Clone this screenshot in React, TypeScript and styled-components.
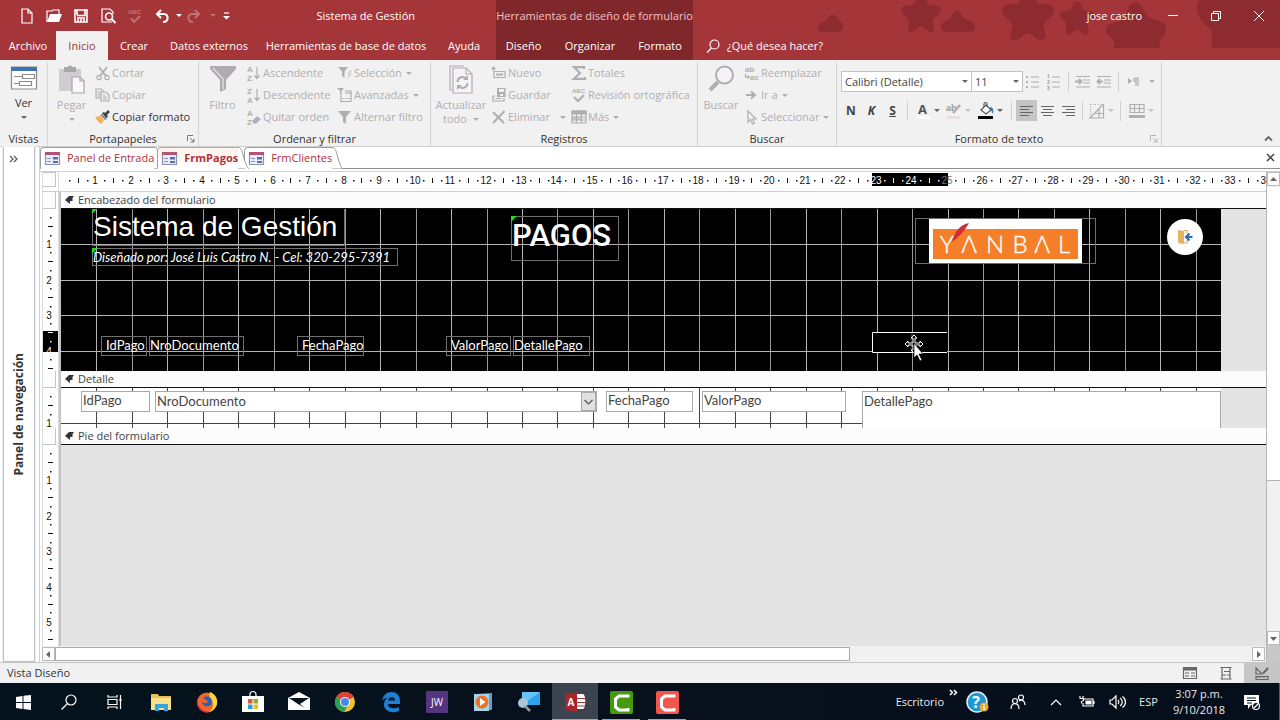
import React from "react";
import styled, { createGlobalStyle, css } from "styled-components";

const UI = `"Open Sans", "Noto Sans", sans-serif`;
const FORM = `Lato, "Open Sans", sans-serif`;
const GLYPH = `"Liberation Sans", Arial, sans-serif`;
const DIM = "#b0aeb0";
const INK = "#444";

const Global = createGlobalStyle`
  * { box-sizing: border-box; }
  body { margin: 0; background: #fff; font: 11px/14px ${UI}; color: #333; }
  button, input, select, textarea { font: inherit; color: inherit; margin: 0; padding: 0; border: 0; background: none; border-radius: 0; }
  button { cursor: default; }
  svg { display: block; flex: none; overflow: visible; }
`;

/* ---------- shell ---------- */

const Shell = styled.div`
  display: flex;
  flex-direction: column;
  min-height: 100vh;
  overflow: hidden;
`;

/* ---------- title bar ---------- */

const Top = styled.header`
  position: relative;
  display: flex;
  height: 60px;
  background: #a43539;
  color: #fff;
`;
const TopPart = styled.div<{ $grow?: boolean; $dark?: boolean; $w?: number }>`
  position: relative;
  display: flex;
  flex-direction: column;
  ${(p) => (p.$grow ? "flex: 1; min-width: 0;" : `width: ${p.$w}px; flex: none;`)}
  ${(p) => p.$dark && "background: #80272c;"}
`;
const Decor = styled.svg`
  position: absolute;
  right: 0;
  top: 0;
  overflow: hidden;
`;
const TitleRow = styled.div`
  display: flex;
  align-items: center;
  height: 31px;
`;
const QuickBar = styled.div`
  display: flex;
  padding-left: 13px;
`;
const QuickButton = styled.button<{ $w?: number; $dim?: boolean }>`
  display: flex;
  align-items: center;
  justify-content: center;
  width: ${(p) => p.$w ?? 27}px;
  height: 30px;
  opacity: ${(p) => (p.$dim ? 0.3 : 1)};
`;
const AppTitle = styled.span`
  margin-left: auto;
  padding-right: 81px;
`;
const ContextTitle = styled.span`
  width: 100%;
  text-align: center;
  white-space: nowrap;
  color: #efc3c4;
`;
const UserName = styled.span`
  margin-left: auto;
  padding-right: 9px;
`;
const WindowButton = styled.button`
  display: flex;
  align-items: center;
  justify-content: center;
  width: 43px;
  height: 30px;
`;
const TabRow = styled.nav`
  display: flex;
  flex: 1;
`;
const RibbonTab = styled.button<{ $w: number; $on?: boolean }>`
  width: ${(p) => p.$w}px;
  white-space: nowrap;
  text-align: center;
  ${(p) => p.$on && "background: #f1f1f1; color: #a43539;"}
`;
const TellMe = styled.button`
  display: flex;
  align-items: center;
  gap: 7px;
  padding-left: 13px;
`;

/* ---------- ribbon ---------- */

const Ribbon = styled.section`
  display: flex;
  height: 87px;
  background: #f1f1f1;
  border-bottom: 1px solid #cfcfcf;
`;
const Group = styled.div<{ $w: number }>`
  position: relative;
  display: flex;
  flex-direction: column;
  flex: none;
  width: ${(p) => p.$w}px;
  margin-top: 2px;
  border-right: 1px solid #d4d4d4;
`;
const GroupBody = styled.div`
  display: flex;
  height: 70px;
`;
const GroupLabel = styled.div`
  display: flex;
  justify-content: center;
  position: relative;
  color: #333;
`;
const Launcher = styled.button`
  position: absolute;
  right: 3px;
  top: 3px;
`;
const BigButton = styled.button<{ $w: number; $dim?: boolean }>`
  display: flex;
  flex-direction: column;
  align-items: center;
  width: ${(p) => p.$w}px;
  padding-top: 3px;
  color: ${(p) => (p.$dim ? DIM : "#333")};
  svg:first-child { margin-bottom: 5px; }
`;
const BigText = styled.span`
  display: flex;
  align-items: center;
  gap: 3px;
`;
const Column = styled.div<{ $w: number }>`
  width: ${(p) => p.$w}px;
`;
const SmallButton = styled.button<{ $on?: boolean }>`
  display: flex;
  align-items: center;
  gap: 1px;
  height: 22px;
  color: ${(p) => (p.$on ? "#333" : DIM)};
  white-space: nowrap;
  width: 100%;
`;
const Caret = styled.i<{ $c?: string; $push?: boolean }>`
  width: 0;
  height: 0;
  margin-left: ${(p) => (p.$push ? "9px" : "3px")};
  border: 3px solid transparent;
  border-top-color: ${(p) => p.$c ?? "currentColor"};
  border-bottom: 0;
`;
const FormatBody = styled.div`
  display: flex;
  flex-direction: column;
  height: 70px;
  padding: 9px 0 0 4px;
  gap: 8px;
`;
const FormatRow = styled.div`
  display: flex;
  align-items: center;
  height: 21px;
`;
const Pick = styled.div<{ $w: number }>`
  position: relative;
  width: ${(p) => p.$w}px;
  height: 21px;
  margin-right: -1px;
  select {
    width: 100%;
    height: 100%;
    padding-left: 3px;
    appearance: none;
    background: #fff;
    border: 1px solid #c3c3c3;
    color: #444;
  }
  i { position: absolute; right: 4px; top: 9px; }
`;
const Tool = styled.button<{ $w: number; $on?: boolean }>`
  display: flex;
  align-items: center;
  justify-content: center;
  width: ${(p) => p.$w}px;
  height: 21px;
  font-weight: 700;
  font-size: 12px;
  color: ${INK};
  ${(p) => p.$on && "background: #c5c5c5;"}
`;
const Rule = styled.span<{ $m: number }>`
  width: 1px;
  height: 20px;
  margin: 0 ${(p) => p.$m}px;
  background: #d0d0d0;
`;
const Collapse = styled.button`
  margin: auto 7px 3px auto;
`;

/* ---------- workspace ---------- */

const Workspace = styled.main`
  display: flex;
  flex: 1;
  min-height: 514px;
  background: #fff;
`;
const NavPane = styled.aside`
  display: flex;
  flex-direction: column;
  align-items: center;
  width: 32px;
  margin: 0 4px 0 3px;
  border: 1px solid #b9bfc6;
  border-top: 0;
  outline: 1px solid #eef0f3;
`;
const NavToggle = styled.button`
  margin: 8px 12px 0 0;
`;
const NavTitle = styled.span`
  margin: auto 0;
  writing-mode: vertical-rl;
  transform: rotate(180deg);
  font-weight: 700;
  font-size: 12px;
  padding-bottom: 4px;
`;
const Document = styled.div`
  display: flex;
  flex-direction: column;
  flex: 1;
  min-width: 0;
  border-left: 1px solid #cfcfcf;
`;
const DocTabs = styled.div`
  display: flex;
  height: 22px;
  border-bottom: 1px solid #8f8f8f;
`;
const DocTab = styled.button<{ $on?: boolean; $lap?: number }>`
  position: relative;
  display: flex;
  align-items: center;
  gap: 7px;
  height: 22px;
  margin-left: ${(p) => p.$lap ?? 0}px;
  padding: 0 0 1px 4px;
  border: 1px solid #a0a0a0;
  border-width: 1px 0 0 1px;
  border-radius: 4px 0 0 0;
  background: #fff;
  color: #b0303a;
  ${(p) =>
    p.$on &&
    css`
      z-index: 1;
      font-weight: 700;
      border-top-color: #dba36c;
      background: linear-gradient(#fdf3ec, #fff);
    `}
`;
const Slope = styled.svg`
  position: absolute;
  left: 100%;
  top: -1px;
`;
const CloseDoc = styled.button`
  margin: 0 5px 0 auto;
`;
const Designer = styled.div`
  display: flex;
  flex: 1;
  margin-top: 2px;
  border-top: 1px solid #cfcfcf;
`;
const Sheet = styled.div`
  display: flex;
  flex-direction: column;
  flex: 1;
  min-width: 0;
  padding-left: 2px;
`;
const Band = styled.div<{ $fill?: boolean }>`
  display: flex;
  ${(p) => p.$fill && "flex: 1;"}
`;
const Gutter = styled.div`
  flex: none;
  width: 17px;
  border: 1px solid #dcdcdc;
  border-width: 0 1px;
  overflow: hidden;
`;
const Selector = styled.button<{ $tall?: boolean }>`
  display: block;
  width: 13px;
  height: ${(p) => (p.$tall ? 15 : 17)}px;
  border: 1px solid #c6c6c6;
  border-width: ${(p) => (p.$tall ? "1px 1px 1px 0" : "0 1px 1px 0")};
  background: #fdfdfd;
`;
const RulerRow = styled.div`
  display: flex;
  height: 20px;
  border-bottom: 1px solid #cfcfcf;
`;
const RulerClip = styled.div`
  flex: 1;
  min-width: 0;
  overflow: hidden;
  padding-left: 1px;
`;
const SectionColumn = styled.div`
  display: flex;
  flex-direction: column;
  flex: 1;
  min-width: 0;
  border-left: 2px solid #c4c4c4;
`;
const SectionBar = styled.h2`
  display: flex;
  align-items: center;
  gap: 4px;
  height: 17px;
  margin: 0;
  padding-left: 4px;
  font: inherit;
  color: #444;
  background: #fcfcfc;
  border-bottom: 1px solid #111;
`;
const Area = styled.div`
  display: flex;
  overflow: hidden;
  flex: 1;
  background: #e4e4e4;
`;
const Canvas = styled.div<{ $h: number; $dark?: boolean }>`
  position: relative;
  flex: none;
  width: 1160px;
  height: ${(p) => p.$h}px;
  overflow: hidden;
  background: ${(p) => (p.$dark ? "#000" : "#fff")};
`;
type Box = { $x: number; $y: number; $w: number; $h: number };
const box = css<Box>`
  position: absolute;
  left: ${(p) => p.$x}px;
  top: ${(p) => p.$y}px;
  width: ${(p) => p.$w}px;
  height: ${(p) => p.$h}px;
`;
const FormLabel = styled.div<Box & { $kind?: "title" | "sub" | "head"; $pad?: number }>`
  ${box}
  border: 1px solid #6f6f6f;
  color: #fff;
  white-space: nowrap;
  font: 13px/16px ${FORM};
  padding-left: ${(p) => p.$pad ?? 0}px;
  ${(p) => p.$kind === "title" && `font: 28px/36px "Liberation Sans", Arial, sans-serif;`}
  ${(p) => p.$kind === "sub" && `font: italic 13px/16px ${FORM};`}
  ${(p) => p.$kind === "head" && `font: 500 31px/38px Roboto, sans-serif;`}
`;
const Flag = styled.i`
  position: absolute;
  left: -1px;
  top: -1px;
  border: 3px solid transparent;
  border-color: #25d52c transparent transparent #25d52c;
`;
const fieldLook = css`
  border: 1px solid #a9a9a9;
  background: #fff;
  color: #444;
  font: 13px/18px ${FORM};
  padding: 0 1px 3px;
`;
const Field = styled.input<Box>`
  ${box}
  ${fieldLook}
`;
const Memo = styled.textarea<Box>`
  ${box}
  ${fieldLook}
  resize: none;
  overflow: hidden;
`;
const Combo = styled.div<Box>`
  ${box}
  select {
    width: 100%;
    height: 100%;
    appearance: none;
    ${fieldLook}
  }
`;
const ComboArrow = styled.span`
  position: absolute;
  right: 1px;
  top: 1px;
  width: 15px;
  height: 19px;
  display: flex;
  align-items: center;
  justify-content: center;
  background: #e0e0e0;
  border: 1px solid #aaa;
`;
const Placed = styled.div<Box>`
  ${box}
`;
const ExitButton = styled.button<Box>`
  ${box}
  display: flex;
  align-items: center;
  justify-content: center;
  border-radius: 50%;
  background: #fff;
`;
const VBar = styled.div`
  display: flex;
  flex-direction: column;
  width: 14px;
  background: #f1f1f1;
  border-left: 1px solid #b5b5b5;
`;
const ScrollButton = styled.button`
  display: flex;
  align-items: center;
  justify-content: center;
  flex: none;
  width: 13px;
  height: 14px;
  border: 1px solid #bbb;
  background: #fff;
  color: #666;
`;
const VThumb = styled.div`
  height: 60%;
  background: #fff;
  border-bottom: 1px solid #b5b5b5;
  margin-top: 1px;
`;
const VRest = styled.div`
  flex: 1;
`;
const Corner = styled.div`
  height: 17px;
  background: #c8c8c8;
`;
const HBar = styled.div`
  display: flex;
  align-items: center;
  height: 16px;
  padding-right: 1px;
  background: #f1f1f1;
`;
const HThumb = styled.div`
  width: 65%;
  height: 14px;
  background: #fff;
  border: 1px solid #ababab;
  margin-right: auto;
`;

/* ---------- status bar and taskbar ---------- */

const StatusBar = styled.footer`
  display: flex;
  align-items: center;
  height: 21px;
  padding-left: 7px;
  background: #f1f1f1;
  border-top: 1px solid #c6c6c6;
`;
const Views = styled.div`
  display: flex;
  margin-left: auto;
  height: 100%;
`;
const ViewButton = styled.button<{ $on?: boolean }>`
  display: flex;
  align-items: center;
  justify-content: center;
  width: 36px;
  ${(p) => p.$on && "background: #c6c6c6;"}
`;
const Taskbar = styled.footer`
  display: flex;
  align-items: center;
  height: 38px;
  background: linear-gradient(90deg, #04131d, #07101c 50%, #050f1b);
  color: #e8eaec;
`;
const TaskButton = styled.button<{ $on?: boolean; $run?: boolean }>`
  display: flex;
  align-items: center;
  justify-content: center;
  width: 46px;
  height: 38px;
  ${(p) => p.$on && "background-color: #3a434e;"}
  ${(p) => (p.$run || p.$on) && "background-image: linear-gradient(#76b0e6, #76b0e6); background-repeat: no-repeat; background-position: center bottom;"}
  ${(p) => p.$on && "background-size: 46px 2px;"}
  ${(p) => p.$run && "background-size: 38px 2px;"}
`;
const Start = styled.div`
  display: flex;
`;
const Tray = styled.div`
  display: flex;
  align-items: center;
  margin-left: auto;
`;
const TrayItem = styled.button<{ $w: number }>`
  display: flex;
  align-items: center;
  justify-content: center;
  width: ${(p) => p.$w}px;
  height: 38px;
`;
const More = styled.button`
  align-self: flex-start;
  margin: 6px 0 0 5px;
`;
const Clock = styled.div`
  width: 72px;
  text-align: center;
  line-height: 16px;
`;
const Edge = styled.span`
  width: 11px;
  height: 38px;
  border-right: 1px solid #55606a;
`;

/* ---------- icons ---------- */

type S = { c?: string; w?: number; h?: number; vb?: string; children?: React.ReactNode };
const Svg = ({ c = DIM, w = 16, h = 16, vb, children }: S) => (
  <svg width={w} height={h} viewBox={vb ?? `0 0 ${w} ${h}`} fill="none" stroke={c} strokeWidth="1.2" aria-hidden="true">
    {children}
  </svg>
);

const Cut = () => (
  <Svg>
    <path d="M4 2l7 9M12 2L5 11" strokeWidth="1.8" />
    <circle cx="4" cy="12.5" r="2.1" />
    <circle cx="12" cy="12.5" r="2.1" />
  </Svg>
);
const Copy = () => (
  <Svg>
    <path d="M1 2h5l2 2v7H1zM2.500 5h3M2.500 7h3M2.500 9h3" />
    <path d="M6 5h5l3 3v6H6z" fill="#f1f1f1" />
    <path d="M8 8h2M8 10h4M8 12h4" />
  </Svg>
);
const Brush = () => (
  <Svg>
    <path d="M0 8l5-1 4 4-3 4c-2-2-4-3-6-7z" fill="#f0b355" stroke="none" />
    <path d="M5 6l2-1 5 5-2 1z" fill="#8b8b8b" stroke="none" />
    <path d="M7 4l2-1 1 1 3-3 2 2-3 3 1 2-2 1z" fill="#444" stroke="none" />
  </Svg>
);
const SortIcon = ({ a, b, eraser }: { a: string; b: string; eraser?: boolean }) => (
  <Svg>
    <text x="1" y="7" fontFamily={GLYPH} fontSize="8" fontWeight="700" fill={DIM} stroke="none">{a}</text>
    <text x="1" y="16" fontFamily={GLYPH} fontSize="8" fontWeight="700" fill={DIM} stroke="none">{b}</text>
    {eraser ? <path d="M7 12l4-4 3 2-4 4H8z" fill={DIM} /> : <path d="M11 2v11M8.500 10.500l2.500 3 2.500-3" />}
  </Svg>
);
const FunnelBolt = () => (
  <Svg>
    <path d="M1 2h10L7.500 6.500V13L5 11V6.500z" fill={DIM} stroke="none" />
    <path d="M13 5l-3 5h2l-2 5 5-6h-2l2-4z" fill="#d4d2d4" stroke="none" />
  </Svg>
);
const FunnelBox = () => (
  <Svg>
    <path d="M0 1h7L4.500 4v5L3 8V4z" fill={DIM} stroke="none" />
    <path d="M4 9v5.500h10V4H8M8 6h6" />
    <path d="M6 11.500h1.500M8.500 11.500H10M11 11.500h1.500" />
  </Svg>
);
const FunnelSmall = () => (
  <Svg>
    <path d="M1 2h13L9 8v7l-3-2V8z" fill={DIM} stroke="none" />
  </Svg>
);
const NewRec = () => (
  <Svg>
    <path d="M3 6.500h11v6H3z" />
    <path d="M5 8.500h7v2H5z" fill={DIM} stroke="none" />
    <path d="M2.500 1v5M0 3.500h5M1 2l3 3M4 2L1 5" strokeWidth=".8" />
  </Svg>
);
const SaveRec = () => (
  <Svg>
    <path d="M6 1h8.500v9H6z" fill={DIM} stroke="none" />
    <path d="M8 2h5v3H8zM9 7h3v2H9z" fill="#f1f1f1" stroke="none" />
    <path d="M4 9H2v5h11v-3M4.500 11.500h6" />
  </Svg>
);
const Delete = () => (
  <Svg>
    <path d="M2 3l11 11M13.500 2L2 14" strokeWidth="2" />
  </Svg>
);
const Sigma = () => (
  <Svg>
    <path d="M13 4V2.200H3L9 8l-6 5.800h11V12" strokeWidth="2.200" />
  </Svg>
);
const Abc = () => (
  <Svg>
    <text x="1" y="6" fontFamily={GLYPH} fontSize="6" fontWeight="700" fill={DIM} stroke="none">ABC</text>
    <path d="M3 10l4 4 6-6" strokeWidth="2.200" />
  </Svg>
);
const TableIcon = () => (
  <Svg>
    <path d="M1 2h14v12H1z" />
    <path d="M1 2h14v3H1z" fill={DIM} />
    <path d="M1 8h14M1 11h14M5.500 5v9M10.500 5v9" />
    <path d="M1 8h9v3H1z" fill={DIM} stroke="none" opacity=".6" />
  </Svg>
);
const Replace = () => (
  <Svg>
    <text x="1" y="7" fontFamily={GLYPH} fontSize="8" fontWeight="700" fill={DIM} stroke="none">ab</text>
    <text x="6" y="15" fontFamily={GLYPH} fontSize="8" fontWeight="700" fill={DIM} stroke="none">ac</text>
    <path d="M1.500 9v3H5M3.500 10.500L5 12l-1.500 1.500" />
  </Svg>
);
const GoTo = () => (
  <Svg>
    <path d="M2 8h9M7 4.500L11 8l-4 3.500" strokeWidth="2" />
  </Svg>
);
const Pointer = () => (
  <Svg>
    <path d="M4 2v11l2.500-2.500L8.500 15l2-1-2-4H12z" />
  </Svg>
);

const ViewBig = () => (
  <Svg w={28} h={26} c="#8a8a8a">
    <path d="M1.500 2h25v22h-25z" fill="#fff" />
    <path d="M1 2h26v4H1z" fill="#3f72b0" stroke="none" />
    <path d="M4 11.500h8M4 18.500h5M12.500 9.500h12v4h-12zM9.500 16.500h12v4h-12z" />
  </Svg>
);
const PasteBig = () => (
  <Svg w={28} h={28} c="#a8a6a8">
    <path d="M1 4h22v22H1z" fill="#cfcdd0" stroke="none" />
    <path d="M6 2h4c0-2 4-2 4 0h4v5H6z" fill="#a8a6a8" stroke="none" />
    <path d="M14 12h8l4 4v12H14z" fill="#faf6fa" />
    <path d="M22 12v4h4" />
  </Svg>
);
const FunnelBig = () => (
  <Svg w={28} h={28}>
    <path d="M1 1h26v3L17 15v9l-6 3V15L1 4z" fill="#aeacae" stroke="none" />
    <path d="M4 3l10 11v10" stroke="#dedcde" strokeWidth="1.500" />
  </Svg>
);
const RefreshBig = () => (
  <Svg w={28} h={28}>
    <path d="M6 25H3V1h14" />
    <path d="M6 3h13l6 6v19H6z" fill="#f6f2f6" />
    <path d="M19 3v6h6" />
    <path d="M10.500 17a5 5 0 0 1 9-3M20.500 18a5 5 0 0 1-9 3" strokeWidth="2" />
    <path d="M21 10v5h-5zM10 25v-5h5z" fill={DIM} stroke="none" />
  </Svg>
);
const FindBig = () => (
  <Svg w={28} h={28}>
    <circle cx="17.500" cy="10" r="8.500" strokeWidth="2" fill="#f6f2f6" />
    <path d="M11 17l-8 8" strokeWidth="4" />
  </Svg>
);

const Lines = ({ kind }: { kind: "l" | "c" | "r" }) => {
  const x = kind === "l" ? 1 : kind === "c" ? 3 : 5;
  return (
    <Svg w={15} h={14} c="#666">
      <path d={`M1 2.500h13M${x} 5.500h9M1 8.500h13M${x} 11.500h9`} />
    </Svg>
  );
};
const ListIcon = ({ num }: { num?: boolean }) => (
  <Svg w={15} h={16}>
    <path d="M6 3h8M6 8h8M6 13h8" />
    {num ? (
      <g fontFamily={GLYPH} fontSize="5" fontWeight="700" fill="#999" stroke="none">
        <text x="1" y="4">1</text>
        <text x="1" y="10">2</text>
        <text x="1" y="16">3</text>
      </g>
    ) : (
      <path d="M1 3h2M1 8h2M1 13h2" strokeWidth="2" />
    )}
  </Svg>
);
const Indent = ({ back }: { back?: boolean }) => (
  <Svg w={16} h={14}>
    <path d="M1 1.500h14M8 5h7M8 8h7M1 12h14" />
    <path d={back ? "M7 6.500H1M4 4L1.500 6.500 4 9" : "M0 6.500h6M4 4l2.500 2.500L4 9"} strokeWidth="1.800" />
  </Svg>
);
const LauncherIcon = ({ c = "#777" }: { c?: string }) => (
  <Svg w={8} h={8} c={c}>
    <path d="M.5 6V.5H6M3 3l4 4M7 3.500V7H3.500" strokeWidth="1" />
  </Svg>
);
const FormIcon = () => (
  <Svg w={15} h={13} c="#8b93b5">
    <path d="M.5 .5h14v12H.5z" fill="#e9edf7" />
    <path d="M0 0h15v3H0z" fill="#b25574" stroke="none" />
    <path d="M2 6.500h4M2 9.500h4" strokeWidth="1" />
    <path d="M8 5h5v2.500H8zM8 9h5v2H8z" fill="#5c6ea8" stroke="none" />
  </Svg>
);
const TabSlope = () => (
  <Slope width="11" height="22">
    <path d="M0 .5C4 .5 4 5 6 11s3 10.500 5 10.500H0z" fill="#fff" />
    <path d="M0 .5C4 .5 4 5 6 11s3 10.500 5 10.500" fill="none" stroke="#999" />
  </Slope>
);
const SectionMark = () => (
  <Svg w={9} h={8} c="#333">
    <path d="M0 4l4-4h5L7.500 2v3L5 5v3z" fill="#333" stroke="none" />
  </Svg>
);
const Tri = ({ d }: { d: string }) => (
  <Svg w={7} h={7} c="none">
    <path d={d} fill="#666" />
  </Svg>
);

/* ---------- rulers and grid ---------- */

const STEP = 35.46;
const at = (k: number) => Math.round(k * STEP);

const HRuler = () => (
  <svg width="1600" height="19" fontFamily={GLYPH} fontSize="10" textAnchor="middle" fill="#111">
    <rect x="812" y="1" width="76" height="13" fill="#000" />
    {Array.from({ length: 45 }, (_, k) => {
      const inv = k > 22 && k < 25;
      const ink = (f: number) => (k + f > 22.9 && k + f < 25 ? "#fff" : "#111");
      return (
        <g key={k}>
          {k > 0 && <text x={at(k)} y="12" fill={inv ? "#fff" : k === 25 ? "#777" : "#111"}>{k}</text>}
          <rect x={at(k + 0.25)} y="8" width="1.500" height="1.500" fill={ink(0.25)} />
          <rect x={at(k + 0.5)} y="6" width="1" height="5" fill={ink(0.5)} />
          <rect x={at(k + 0.75)} y="8" width="1.500" height="1.500" fill={ink(0.75)} />
        </g>
      );
    })}
  </svg>
);

const Clipped = styled.svg`
  overflow: hidden;
`;

const VRuler = ({ h, mark }: { h: number; mark?: [number, number] }) => (
  <Clipped width="15" height={h} fontFamily={GLYPH} fontSize="10" textAnchor="middle" fill="#111">
    {mark && <rect x="0" y={mark[0]} width="15" height={mark[1]} fill="#000" />}
    {Array.from({ length: Math.floor(h / STEP) + 1 }, (_, k) => {
      const ink = (y: number) => (mark && y >= mark[0] && y < mark[0] + mark[1] ? "#fff" : "#111");
      return (
        <g key={k}>
          {k > 0 && <text x="6" y={at(k) + 4} fill={ink(at(k))}>{k}</text>}
          <rect x="7" y={at(k + 0.25) - 1} width="1.500" height="1.500" fill={ink(at(k + 0.25))} />
          <rect x="5" y={at(k + 0.5) - 1} width="5" height="1" fill={ink(at(k + 0.5))} />
          <rect x="7" y={at(k + 0.75) - 1} width="1.500" height="1.500" fill={ink(at(k + 0.75))} />
        </g>
      );
    })}
  </Clipped>
);

const Grid = ({ h, dark }: { h: number; dark?: boolean }) => (
  <Clipped width="1160" height={h}>
    {Array.from({ length: 33 }, (_, i) => (
      <rect key={i} x={at(i + 1)} y="0" width="1" height={h} fill={dark ? (i % 2 ? "#999" : "#b4b4b4") : "#444"} />
    ))}
    {Array.from({ length: 4 }, (_, i) => (
      <rect key={i} x="0" y={at(i + 1)} width="1160" height="1" fill={dark ? "#b4b4b4" : "#444"} />
    ))}
  </Clipped>
);

const STAR =
  "M0-13C4-13 4-6 6-5C9-4 15-5 15-1C15 3 9 5 9 8C9 11 12 15 8 16C5 17 3 12 0 12C-3 12-5 17-8 16C-12 15-9 11-9 8C-9 5-15 3-15-1C-15-5-9-4-6-5C-4-6-4-13 0-13Z";

export default function App() {
  return (
    <Shell>
      <Global />
      <Top>
        <Decor width="470" height="48" fill="#8d2b30" aria-hidden="true">
          <path d="M8 28c0-6 8-6 10-10 3-5 9-3 10 1 2 4 7 4 5 9-1 4-5 4-8 4H14c-3 0-6-1-6-4z" />
          <path transform="translate(111 11) scale(1.300)" d={STAR} />
          <path d="M131 27c0-6 7-6 10-10 3-8 9-8 11-1 2 5 12 4 13 10 1 5-5 6-8 6h-18c-5 0-8-1-8-5z" />
          <path transform="translate(218 12) scale(1.750)" d={STAR} />
          <path transform="translate(267 16) scale(1.150)" d={STAR} />
          <path d="M296 31c-1-9 14-8 18-13 3-6 5-16 12-16 6 0 8 12 14 16 5 3 16 2 16 11 0 8-8 8-6 19h-46c3-11-7-10-8-17z" />
          <path d="M390 0h80v48h-68V31c-5-5-13-10-15-20-1-6 0-9 3-11z" />
        </Decor>
        <TopPart $w={496}>
          <TitleRow>
            <QuickBar>
              <QuickButton aria-label="Nuevo">
                <Svg c="#fff" w={14} h={16}><path d="M2 1h6l4 4v10H2zM8 1v4h4" /></Svg>
              </QuickButton>
              <QuickButton aria-label="Abrir">
                <Svg c="#fff"><path d="M1 14V3h5l1-1h6v4" /><path d="M1 14L4 6h12l-3 8z" fill="#fff" stroke="none" /></Svg>
              </QuickButton>
              <QuickButton aria-label="Guardar">
                <Svg c="#fff"><path d="M2 2h12v12H2z" strokeWidth="1.600" /><path d="M4 7.500h8V2M4 2v5M5 14v-4h6v4M8 11v3" strokeWidth="1.600" /></Svg>
              </QuickButton>
              <QuickButton aria-label="Vista previa">
                <Svg c="#fff"><path d="M12 14H2V1h8l3 3v2" /><circle cx="9" cy="8.500" r="3.500" strokeWidth="1.600" /><path d="M11.500 11l4 4" strokeWidth="2" /></Svg>
              </QuickButton>
              <QuickButton $dim aria-label="Ortografía">
                <Svg c="#fff"><text x="1" y="6" fontFamily={GLYPH} fontSize="6" fontWeight="700" fill="#fff" stroke="none">ABC</text><path d="M4 10l3 4 6-6" strokeWidth="2" /></Svg>
              </QuickButton>
              <QuickButton aria-label="Deshacer">
                <Svg c="#fff"><path d="M7 2L3 6l4 4M3 6h7c5 0 5 8-1 8" strokeWidth="2" /></Svg>
              </QuickButton>
              <QuickButton $w={4} aria-label="Lista deshacer"><Caret /></QuickButton>
              <QuickButton $w={30} $dim aria-label="Rehacer">
                <Svg c="#fff"><path d="M9 2l4 4-4 4M13 6H6c-5 0-5 8 1 8" strokeWidth="2" /></Svg>
              </QuickButton>
              <QuickButton $w={4} $dim aria-label="Lista rehacer"><Caret /></QuickButton>
              <QuickButton aria-label="Personalizar">
                <Svg c="#fff" w={7} h={8}><path d="M1 1h5" /><path d="M0 4h7L3.500 7.500z" fill="#fff" stroke="none" /></Svg>
              </QuickButton>
            </QuickBar>
            <AppTitle>Sistema de Gestión</AppTitle>
          </TitleRow>
          <TabRow>
            <RibbonTab $w={56}>Archivo</RibbonTab>
            <RibbonTab $w={52} $on>Inicio</RibbonTab>
            <RibbonTab $w={52}>Crear</RibbonTab>
            <RibbonTab $w={98}>Datos externos</RibbonTab>
            <RibbonTab $w={176}>Herramientas de base de datos</RibbonTab>
            <RibbonTab $w={60}>Ayuda</RibbonTab>
          </TabRow>
        </TopPart>
        <TopPart $w={197} $dark>
          <TitleRow>
            <ContextTitle>Herramientas de diseño de formulario</ContextTitle>
          </TitleRow>
          <TabRow>
            <RibbonTab $w={55}>Diseño</RibbonTab>
            <RibbonTab $w={78}>Organizar</RibbonTab>
            <RibbonTab $w={62}>Formato</RibbonTab>
          </TabRow>
        </TopPart>
        <TopPart $grow>
          <TitleRow>
            <UserName>jose castro</UserName>
            <WindowButton aria-label="Minimizar"><Svg c="#fff" w={10} h={10}><path d="M0 4.500h10" strokeWidth="1" /></Svg></WindowButton>
            <WindowButton aria-label="Restaurar"><Svg c="#fff" w={10} h={10}><path d="M.5 2.500h7v7h-7zM2.500 2.500v-2h7v7h-2" strokeWidth="1" /></Svg></WindowButton>
            <WindowButton aria-label="Cerrar"><Svg c="#fff" w={10} h={10}><path d="M0 0l10 10M10 0L0 10" strokeWidth="1" /></Svg></WindowButton>
          </TitleRow>
          <TabRow>
            <TellMe>
              <Svg c="#fff" w={14} h={14}><circle cx="8.500" cy="5.500" r="4.500" /><path d="M5.500 9L1 13.500" /></Svg>
              ¿Qué desea hacer?
            </TellMe>
          </TabRow>
        </TopPart>
      </Top>

      <Ribbon>
        <Group $w={48}>
          <GroupBody>
            <BigButton $w={47}><ViewBig /><BigText>Ver</BigText><Svg w={6} h={14} c="none"><path d="M0 6h6L3 9z" fill="#666" /></Svg></BigButton>
          </GroupBody>
          <GroupLabel>Vistas</GroupLabel>
        </Group>
        <Group $w={151}>
          <GroupBody>
            <BigButton $w={47} $dim><PasteBig /><BigText>Pegar</BigText><Svg w={6} h={14} c="none"><path d="M0 6h6L3 9z" fill={DIM} /></Svg></BigButton>
            <Column $w={100}>
              <SmallButton><Cut />Cortar</SmallButton>
              <SmallButton><Copy />Copiar</SmallButton>
              <SmallButton $on><Brush />Copiar formato</SmallButton>
            </Column>
          </GroupBody>
          <GroupLabel>Portapapeles<Launcher aria-label="Opciones del portapapeles"><LauncherIcon /></Launcher></GroupLabel>
        </Group>
        <Group $w={232}>
          <GroupBody>
            <BigButton $w={47} $dim><FunnelBig /><BigText>Filtro</BigText></BigButton>
            <Column $w={91}>
              <SmallButton><SortIcon a="A" b="Z" />Ascendente</SmallButton>
              <SmallButton><SortIcon a="Z" b="A" />Descendente</SmallButton>
              <SmallButton><SortIcon a="A" b="Z" eraser />Quitar orden</SmallButton>
            </Column>
            <Column $w={90}>
              <SmallButton><FunnelBolt />Selección<Caret /></SmallButton>
              <SmallButton><FunnelBox />Avanzadas<Caret /></SmallButton>
              <SmallButton><FunnelSmall />Alternar filtro</SmallButton>
            </Column>
          </GroupBody>
          <GroupLabel>Ordenar y filtrar</GroupLabel>
        </Group>
        <Group $w={267}>
          <GroupBody>
            <BigButton $w={60} $dim><RefreshBig /><BigText>Actualizar</BigText><BigText>todo<Caret /></BigText></BigButton>
            <Column $w={80}>
              <SmallButton><NewRec />Nuevo</SmallButton>
              <SmallButton><SaveRec />Guardar</SmallButton>
              <SmallButton><Delete />Eliminar<Caret $push /></SmallButton>
            </Column>
            <Column $w={120}>
              <SmallButton><Sigma />Totales</SmallButton>
              <SmallButton><Abc />Revisión ortográfica</SmallButton>
              <SmallButton><TableIcon />Más<Caret /></SmallButton>
            </Column>
          </GroupBody>
          <GroupLabel>Registros</GroupLabel>
        </Group>
        <Group $w={139}>
          <GroupBody>
            <BigButton $w={46} $dim><FindBig /><BigText>Buscar</BigText></BigButton>
            <Column $w={90}>
              <SmallButton><Replace />Reemplazar</SmallButton>
              <SmallButton><GoTo />Ir a<Caret /></SmallButton>
              <SmallButton><Pointer />Seleccionar<Caret /></SmallButton>
            </Column>
          </GroupBody>
          <GroupLabel>Buscar</GroupLabel>
        </Group>
        <Group $w={325}>
          <FormatBody>
            <FormatRow>
              <Pick $w={131}><select aria-label="Fuente"><option>Calibri (Detalle)</option></select><Caret $c="#666" /></Pick>
              <Pick $w={52}><select aria-label="Tamaño de fuente"><option>11</option></select><Caret $c="#666" /></Pick>
              <Tool $w={20} aria-label="Viñetas"><ListIcon /></Tool>
              <Tool $w={22} aria-label="Numeración"><ListIcon num /></Tool>
              <Rule $m={4} />
              <Tool $w={20} aria-label="Aumentar sangría"><Indent /></Tool>
              <Tool $w={21} aria-label="Reducir sangría"><Indent back /></Tool>
              <Rule $m={4} />
              <Tool $w={36} aria-label="Dirección del texto">
                <Svg w={12} h={12}><path d="M0 2v6l4-3z" fill={DIM} stroke="none" /><path d="M11 2H7.500a1.500 1.500 0 0 0 0 3.500M8 2v8M10 2v8" /></Svg>
                <Caret $c={DIM} $push />
              </Tool>
            </FormatRow>
            <FormatRow>
              <Tool $w={20} aria-label="Negrita">N</Tool>
              <Tool $w={21} aria-label="Cursiva"><em>K</em></Tool>
              <Tool $w={21} aria-label="Subrayado"><u>S</u></Tool>
              <Rule $m={4} />
              <Tool $w={30} aria-label="Color de fuente">
                <Svg w={16} h={18}><text x="3" y="12" fontSize="13" fontWeight="700" fill="#555" stroke="none">A</text><path d="M2 15.500h13" stroke="#fff" strokeWidth="3" /></Svg>
                <Caret $c="#666" />
              </Tool>
              <Tool $w={32} aria-label="Resaltado">
                <Svg w={16} h={18}><text x="0" y="9" fontFamily={GLYPH} fontSize="9" fill="#999" stroke="none">ab</text><path d="M14 3L7 11" strokeWidth="2.500" /><path d="M1 15.500h13" stroke="#e8dfe2" strokeWidth="3" /></Svg>
                <Caret $c="#c4c4c4" />
              </Tool>
              <Tool $w={33} aria-label="Color de fondo">
                <Svg w={16} h={18}>
                  <path d="M3 8l5-5 5 5-5 4z" stroke="#555" fill="#fff" />
                  <path d="M6 5V2a1.500 1.500 0 0 1 3 0v3" stroke="#555" />
                  <path d="M12 5c3 0 4 3 3 7-1-2-1-3-3-4z" fill="#3f72b0" stroke="none" />
                  <path d="M0 15.500h15" stroke="#000" strokeWidth="3" />
                </Svg>
                <Caret $c="#666" />
              </Tool>
              <Rule $m={4} />
              <Tool $w={21} $on aria-label="Alinear a la izquierda"><Lines kind="l" /></Tool>
              <Tool $w={21} aria-label="Centrar"><Lines kind="c" /></Tool>
              <Tool $w={20} aria-label="Alinear a la derecha"><Lines kind="r" /></Tool>
              <Rule $m={4} />
              <Tool $w={29} aria-label="Líneas de división">
                <Svg w={16} h={16}><path d="M1 1.500h13M1.500 1v13" strokeDasharray="1 1.500" /><path d="M14.500 1v14H1L14.500 1M10 6v9M6 10.500h8.500" /></Svg>
                <Caret $c="#c4c4c4" />
              </Tool>
              <Rule $m={4} />
              <Tool $w={32} aria-label="Color de fila alternativo">
                <Svg w={16} h={16}><path d="M1 1.500h14v8H1zM1 5.500h14M5.500 1v8M10.500 1v8" /><path d="M0 13.500h16" strokeWidth="3" /></Svg>
                <Caret $c="#c4c4c4" />
              </Tool>
            </FormatRow>
          </FormatBody>
          <GroupLabel>Formato de texto<Launcher aria-label="Opciones de formato"><LauncherIcon c="#b5b5b5" /></Launcher></GroupLabel>
        </Group>
        <Collapse aria-label="Contraer la cinta"><Svg w={9} h={9} c="#666"><path d="M1 6.500L4.500 3 8 6.500" strokeWidth="1.800" /></Svg></Collapse>
      </Ribbon>

      <Workspace>
        <NavPane>
          <NavToggle aria-label="Abrir panel"><Svg w={9} h={8} c="#555"><path d="M1 1l3 3-3 3M5 1l3 3-3 3" /></Svg></NavToggle>
          <NavTitle>Panel de navegación</NavTitle>
        </NavPane>
        <Document>
          <DocTabs>
            <DocTab><FormIcon />Panel de Entrada<TabSlope /></DocTab>
            <DocTab $on $lap={3}><FormIcon />FrmPagos<TabSlope /></DocTab>
            <DocTab $lap={6}><FormIcon />FrmClientes<TabSlope /></DocTab>
            <CloseDoc aria-label="Cerrar formulario"><Svg w={9} h={9} c="#444"><path d="M1 1l7 7M8 1L1 8" strokeWidth="1.500" /></Svg></CloseDoc>
          </DocTabs>
          <Designer>
            <Sheet>
              <RulerRow>
                <Gutter><Selector $tall aria-label="Seleccionar formulario" /></Gutter>
                <RulerClip><HRuler /></RulerClip>
              </RulerRow>
              <Band>
                <Gutter><Selector aria-label="Seleccionar encabezado" /><VRuler h={162} mark={[122, 21]} /></Gutter>
                <SectionColumn>
                  <SectionBar><SectionMark />Encabezado del formulario</SectionBar>
                  <Area>
                    <Canvas $h={162} $dark>
                      <Grid h={162} dark />
                      <FormLabel $x={31} $y={-1} $w={253} $h={38} $kind="title"><Flag />Sistema de Gestión</FormLabel>
                      <FormLabel $x={31} $y={39} $w={306} $h={18} $kind="sub"><Flag />Diseñado por: José Luis Castro N. - Cel: 320-295-7391</FormLabel>
                      <FormLabel $x={450} $y={7} $w={108} $h={45} $kind="head"><Flag />PAGOS</FormLabel>
                      <FormLabel $x={40} $y={127} $w={46} $h={20} $pad={4}>IdPago</FormLabel>
                      <FormLabel $x={88} $y={127} $w={95} $h={20}>NroDocumento</FormLabel>
                      <FormLabel $x={236} $y={127} $w={67} $h={20} $pad={4}>FechaPago</FormLabel>
                      <FormLabel $x={385} $y={127} $w={65} $h={20} $pad={4}>ValorPago</FormLabel>
                      <FormLabel $x={452} $y={127} $w={77} $h={20}>DetallePago</FormLabel>
                      <Placed $x={854} $y={9} $w={181} $h={46}>
                        <svg width="181" height="46" role="img" aria-label="Yanbal">
                          <rect x=".5" y=".5" width="180" height="45" fill="none" stroke="#6f6f6f" />
                          <rect x="14" y="1" width="153" height="44" fill="#fff" />
                          <rect x="18" y="11" width="145" height="30" fill="#f57f29" />
                          <text x="32 54 80 105 127 149" y="35" fontSize="24" fontWeight="300" fontFamily="Lato, sans-serif" textAnchor="middle" fill="#fff" stroke="#fff" strokeWidth=".4">YANBAL</text>
                          <path d="M51.500 26h5l2 5h-9zM124.500 26h5l2 5h-9z" fill="#f57f29" />
                          <path d="M37 24C39 15 44 7 54 5c-4 7-9 13-17 19z" fill="#cf2c3c" />
                        </svg>
                      </Placed>
                      <ExitButton $x={1106} $y={10} $w={36} $h={36} aria-label="Salir">
                        <Svg w={16} h={16} c="#d9b06c">
                          <path d="M7 1.500h3v3M10 11v3H7" />
                          <path d="M1 1l6 1v13l-6-1z" fill="#e3b563" stroke="none" />
                          <path d="M15.500 8H10M12.500 4.500L9 8l3.500 3.500" stroke="#2f6cb4" strokeWidth="2.200" />
                        </Svg>
                      </ExitButton>
                      <Placed $x={811} $y={123} $w={76} $h={39}>
                        <svg width="76" height="39" aria-hidden="true">
                          <path d="M75 .5H.5v20H75" fill="#000" stroke="#fff" />
                          <path d="M40 1v19" stroke="#666" />
                          <path d="M42 3l3 3h-2v5h5V9l3 3-3 3v-2h-5v5h2l-3 3-3-3h2v-5h-5v2l-3-3 3-3v2h5V6h-2z" fill="#000" stroke="#fff" />
                          <path d="M42 11v15l3-3 3 6 2-1-3-6h4z" fill="#fff" stroke="#000" strokeWidth=".7" />
                        </svg>
                      </Placed>
                    </Canvas>
                  </Area>
                </SectionColumn>
              </Band>
              <Band>
                <Gutter><Selector aria-label="Seleccionar detalle" /><VRuler h={40} /></Gutter>
                <SectionColumn>
                  <SectionBar><SectionMark />Detalle</SectionBar>
                  <Area>
                    <Canvas $h={40}>
                      <Grid h={40} />
                      <Field $x={20} $y={3} $w={69} $h={21} aria-label="IdPago" defaultValue="IdPago" />
                      <Combo $x={94} $y={3} $w={442} $h={21}>
                        <select aria-label="NroDocumento"><option>NroDocumento</option></select>
                        <ComboArrow><Svg w={9} h={6} c="#555"><path d="M.5 1l4 4 4-4" /></Svg></ComboArrow>
                      </Combo>
                      <Field $x={545} $y={3} $w={87} $h={21} aria-label="FechaPago" defaultValue="FechaPago" />
                      <Field $x={641} $y={3} $w={144} $h={21} aria-label="ValorPago" defaultValue="ValorPago" />
                      <Memo $x={801} $y={3} $w={359} $h={60} aria-label="DetallePago" defaultValue="DetallePago" />
                    </Canvas>
                  </Area>
                </SectionColumn>
              </Band>
              <Band $fill>
                <Gutter><Selector aria-label="Seleccionar pie" /><VRuler h={201} /></Gutter>
                <SectionColumn>
                  <SectionBar><SectionMark />Pie del formulario</SectionBar>
                  <Area />
                </SectionColumn>
              </Band>
              <HBar>
                <ScrollButton aria-label="Izquierda"><Tri d="M5 0v7L1 3.500z" /></ScrollButton>
                <HThumb />
                <ScrollButton aria-label="Derecha"><Tri d="M2 0v7l4-3.500z" /></ScrollButton>
              </HBar>
            </Sheet>
            <VBar>
              <ScrollButton aria-label="Arriba"><Tri d="M0 5h7L3.500 1z" /></ScrollButton>
              <VThumb />
              <VRest />
              <ScrollButton aria-label="Abajo"><Tri d="M0 2h7L3.500 6z" /></ScrollButton>
              <Corner />
            </VBar>
          </Designer>
        </Document>
      </Workspace>

      <StatusBar>
        Vista Diseño
        <Views>
          <ViewButton aria-label="Vista Formulario"><Svg w={14} h={13} c="#666"><path d="M.5 .5h13v11H.5z" /><path d="M0 0h14v3.500H0z" fill="#666" stroke="none" /><path d="M2 6h4M2 9h4M8 6h4M8 9h4" /></Svg></ViewButton>
          <ViewButton aria-label="Vista Presentación"><Svg w={12} h={13} c="#666"><path d="M.5 .5h11M.5 12h11M2 .5V12M10 .5V12M4 4.500h6M2 8h4M7 8h3" /></Svg></ViewButton>
          <ViewButton $on aria-label="Vista Diseño"><Svg w={14} h={13} c="#666"><path d="M1 7V1l6 6zM1 9.500h12v3H1zM3 10v1M6 10v1M9 10v1" /><path d="M13 1L8 6.500" strokeWidth="2" /></Svg></ViewButton>
        </Views>
      </StatusBar>

      <Taskbar>
        <Start>
          <TaskButton aria-label="Inicio de Windows"><Svg w={15} h={15} c="none"><path d="M0 2l6.500-1v6H0zM7.500 .8L15 0v7H7.500zM0 8h6.500v6L0 13zM7.500 8H15v7l-7.500-1z" fill="#fff" /></Svg></TaskButton>
          <TaskButton aria-label="Buscar"><Svg w={16} h={16} c="#fff"><circle cx="10" cy="6" r="5" /><path d="M6.500 9.500L.5 15.500" /></Svg></TaskButton>
          <TaskButton aria-label="Vista de tareas"><Svg w={16} h={16} c="#fff"><path d="M1 1v2h9V1M1 15v-2h9v2M1 5.500h9v5H1zM13.500 1v14M12 6h3" /></Svg></TaskButton>
          <TaskButton aria-label="Explorador">
            <Svg w={22} h={20} c="none"><path d="M1 2h7l1 2h12v14H1z" fill="#e8bf55" /><path d="M1 6h20v12H1z" fill="#fbe08b" /><path d="M5 19v-7h13v7h-4v-3H9v3z" fill="#38a3dd" /></Svg>
          </TaskButton>
          <TaskButton aria-label="Firefox">
            <Svg w={22} h={22} c="none"><circle cx="11" cy="11.500" r="10" fill="#f4642a" /><path d="M14 1c5 2 8 6 7 12-1 4-4 7-8 8 5-4 5-9 2-12-2-2-2-5-1-8z" fill="#ffd43a" /><path d="M1 9c1 8 6 12 13 12C6 23 0 17 1 9z" fill="#d6234a" /><circle cx="11" cy="10.500" r="5" fill="#2660b8" /><path d="M6 8c2-1 5 1 6 3-2 2-4 1-6 0z" fill="#f4642a" /></Svg>
          </TaskButton>
          <TaskButton aria-label="Microsoft Store">
            <Svg w={22} h={22} c="#fff"><path d="M8 6V3.500a3 3 0 0 1 6 0V6" /><path d="M0 5h22v16H0z" fill="#fff" stroke="none" /><path d="M6 8h4.500v4.500H6z" fill="#e2552d" stroke="none" /><path d="M11.500 8H16v4.500h-4.500z" fill="#7fb52c" stroke="none" /><path d="M6 13.500h4.500V18H6z" fill="#2b9fd8" stroke="none" /><path d="M11.500 13.500H16V18h-4.500z" fill="#f6b91f" stroke="none" /></Svg>
          </TaskButton>
          <TaskButton aria-label="Correo">
            <Svg w={24} h={20} c="none"><path d="M1 6l11-6 11 6v12H1z" fill="#fff" /><path d="M2 6h20l-9 6 5 4-7-4z" fill="#07131d" /></Svg>
          </TaskButton>
          <TaskButton aria-label="Chrome">
            <Svg w={22} h={22} c="none"><circle cx="11" cy="11" r="10" fill="#f3c232" /><path d="M11 11L2.300 6a10 10 0 0 1 17.400 0z" fill="#dc4437" /><path d="M11 11L2.300 6A10 10 0 0 0 10 21l5-8z" fill="#2e9e58" /><path d="M11 6h8.700l-2-3z" fill="#dc4437" /><circle cx="11" cy="11" r="5" fill="#fff" /><circle cx="11" cy="11" r="4" fill="#4a87ec" /></Svg>
          </TaskButton>
          <TaskButton aria-label="Edge">
            <Svg w={20} h={20} c="none"><path d="M1 9C2 3 6 0 10.500 0 16 0 19 4 19 9v3H7c0 5 7 5 11 3v4c-7 3-15 0-15-6 0-3 1-6 4-7-3 0-5 1-6 3zM7 8.500h7C14 4 8 4 7 8.500z" fill="#1c7fd6" /></Svg>
          </TaskButton>
          <TaskButton aria-label="JW">
            <Svg w={22} h={22} c="none"><path d="M0 0h22v22H0z" fill="#553482" /><text x="11" y="15" fontSize="10" textAnchor="middle" fill="#fff">JW</text></Svg>
          </TaskButton>
          <TaskButton aria-label="Reproductor">
            <Svg w={20} h={20} c="none"><path d="M3 2l16-1v17H5z" fill="#5aa3cc" /><path d="M1 2h15v17H1z" fill="#a9d3ea" /><circle cx="9" cy="10" r="6.500" fill="#e8742a" /><path d="M7 6l5.500 4L7 14z" fill="#fff" /></Svg>
          </TaskButton>
          <TaskButton aria-label="Lupa">
            <Svg w={24} h={22} c="none"><path d="M5 1h18v13H5z" fill="#2ea4ec" /><path d="M5 14L23 1H5z" fill="#67c2f6" /><circle cx="6" cy="12" r="5" fill="#a9c6d8" /><path d="M8 15l5 5" stroke="#8f9aa2" strokeWidth="2.500" /></Svg>
          </TaskButton>
          <TaskButton $on aria-label="Access">
            <Svg w={22} h={22} c="none"><path d="M11 3h8c3 0 3 15 0 15h-8z" fill="#fff" /><path d="M12 7.500h9M12 11.500h9M12 15h9" stroke="#a4373a" strokeWidth="1.200" /><path d="M1 3l12-2v20L1 19z" fill="#a4262c" /><text x="7" y="15" fontSize="10" fontWeight="700" textAnchor="middle" fill="#fff">A</text></Svg>
          </TaskButton>
          <TaskButton $run aria-label="Camtasia">
            <Svg w={23} h={23} c="none"><rect width="23" height="23" rx="2" fill="#47990f" /><path d="M18 6.500V5h-9L5.500 8v8l3.500 3h9v-2" stroke="#fff" strokeWidth="3" /></Svg>
          </TaskButton>
          <TaskButton $run aria-label="Grabador Camtasia">
            <Svg w={23} h={23} c="none"><rect width="23" height="23" rx="2" fill="#f2564c" /><path d="M18 6.500V5h-9L5.500 8v8l3.500 3h9v-2" stroke="#fff" strokeWidth="3" /></Svg>
          </TaskButton>
        </Start>
        <Tray>
          <span>Escritorio</span>
          <More aria-label="Más"><Svg w={9} h={7} c="#fff"><path d="M1 1l2.500 2.500L1 6M5 1l2.500 2.500L5 6" strokeWidth="1.500" /></Svg></More>
          <TrayItem $w={40} aria-label="Ayuda">
            <Svg w={24} h={24} c="none"><circle cx="11" cy="12" r="10" fill="#1f96d6" stroke="#e8f2f8" strokeWidth="1.500" /><text x="10" y="18" fontSize="16" fontWeight="700" textAnchor="middle" fill="#fff">?</text><circle cx="18" cy="17" r="4.500" fill="#f0a92c" /><path d="M18 16v4M18 14v1" stroke="#fff" strokeWidth="1.500" /></Svg>
          </TrayItem>
          <TrayItem $w={40} aria-label="Contactos">
            <Svg w={16} h={16} c="#fff"><circle cx="5" cy="7" r="2.500" /><path d="M1 15c0-7 8-7 8 0" /><circle cx="11" cy="3.500" r="2.500" /><path d="M9 7c3-2 6 0 6 4" /></Svg>
          </TrayItem>
          <TrayItem $w={36} aria-label="Iconos ocultos"><Svg w={12} h={8} c="#fff"><path d="M1 7l5-5 5 5" /></Svg></TrayItem>
          <TrayItem $w={26} aria-label="Batería"><Svg w={16} h={12} c="#fff"><path d="M5 3h9v7H4V7M15 5v3" /><path d="M7 5h5v3H7z" fill="#fff" /><path d="M1 0v2M4 0v2M.5 2.500h4v2l-2 1v2" /></Svg></TrayItem>
          <TrayItem $w={34} aria-label="Volumen"><Svg w={17} h={14} c="#fff"><path d="M1 5h2l4-4v12L3 9H1zM9 5c1 1 1 3 0 4M11 3c3 2 3 6 0 8M13.500 1.500c4 3 4 8 0 11" /></Svg></TrayItem>
          <TrayItem $w={29}>ESP</TrayItem>
          <Clock>3:07 p.m.<br />9/10/2018</Clock>
          <TrayItem $w={34} aria-label="Notificaciones">
            <Svg w={16} h={16} c="#07131d"><path d="M0 1h15v10H7l-3 4v-4H0z" fill="#fff" stroke="none" /><path d="M3 4h9M3 6.500h9M3 9h5" /><circle cx="12" cy="12" r="3.500" fill="#07131d" stroke="#fff" /><path d="M10 14l4-4" stroke="#fff" /></Svg>
          </TrayItem>
          <Edge />
        </Tray>
      </Taskbar>
    </Shell>
  );
}
